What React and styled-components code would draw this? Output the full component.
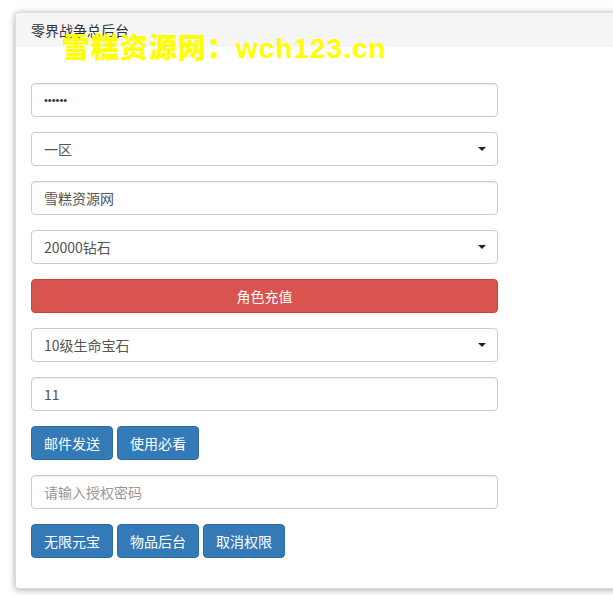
import React, { useState } from "react";
import styled, { createGlobalStyle } from "styled-components";

const GlobalStyle = createGlobalStyle`
  body {
    margin: 0;
    background: #fff;
    font-family: "Microsoft YaHei", "Noto Sans CJK SC", "Liberation Sans", sans-serif;
    font-size: 14px;
    color: #333;
  }
`;

const Page = styled.div`
  padding: 12px 0 0 15px;
  width: 613px;
  height: 595px;
  box-sizing: border-box;
  overflow: hidden;
`;

const Panel = styled.div`
  position: relative;
  width: 620px;
  background: #fff;
  border: 1px solid #ddd;
  border-radius: 4px;
  box-shadow: 0 1px 6px rgba(0, 0, 0, 0.35);
`;

const Heading = styled.div`
  height: 34px;
  padding: 0 15px;
  display: flex;
  align-items: center;
  background: #f5f5f5;
  border-radius: 3px 3px 0 0;
  font-size: 14px;
  color: #333;
`;

const Watermark = styled.div`
  position: absolute;
  left: 46px;
  top: 21px;
  font-family: "Liberation Sans", "Noto Sans CJK SC", sans-serif;
  font-weight: 900;
  font-size: 28px;
  line-height: 30px;
  letter-spacing: 1px;
  color: #ffff00;
  white-space: nowrap;
  pointer-events: none;
`;

const Body = styled.div`
  padding: 36px 15px 30px;
  width: 467px;
  display: flex;
  flex-direction: column;
  gap: 15px;
`;

const Input = styled.input`
  box-sizing: border-box;
  width: 100%;
  height: 34px;
  padding: 6px 12px;
  border: 1px solid #ccc;
  border-radius: 4px;
  font: inherit;
  font-size: 14px;
  color: #555;
  box-shadow: inset 0 1px 1px rgba(0, 0, 0, 0.075);
  outline: none;

  &[type="password"] {
    font-family: "Liberation Sans", sans-serif;
    font-size: 11px;
    letter-spacing: 0;
    color: #333;
  }

  &::placeholder {
    color: #999;
  }
`;

const SelectWrap = styled.div`
  position: relative;

  &::after {
    content: "";
    position: absolute;
    right: 12px;
    top: 15px;
    border-left: 4px solid transparent;
    border-right: 4px solid transparent;
    border-top: 4px solid #222;
    pointer-events: none;
  }
`;

const Select = styled.select`
  box-sizing: border-box;
  width: 100%;
  height: 34px;
  padding: 6px 12px;
  border: 1px solid #ccc;
  border-radius: 4px;
  background: #fff;
  font: inherit;
  font-size: 14px;
  color: #555;
  appearance: none;
  outline: none;
`;

const Button = styled.button`
  box-sizing: border-box;
  height: 34px;
  padding: 6px 12px;
  border: 1px solid ${(p) => (p.$danger ? "#d43f3a" : "#2e6da4")};
  border-radius: 4px;
  background: ${(p) => (p.$danger ? "#d9534f" : "#337ab7")};
  color: #fff;
  font: inherit;
  font-size: 14px;
  width: ${(p) => (p.$block ? "100%" : "auto")};
  cursor: pointer;
`;

const ButtonRow = styled.div`
  display: flex;
  gap: 4px;
`;

const Field = ({ options, value, onChange }) => (
  <SelectWrap>
    <Select value={value} onChange={(e) => onChange(e.target.value)}>
      {options.map((o) => (
        <option key={o}>{o}</option>
      ))}
    </Select>
  </SelectWrap>
);

export default function App() {
  const [server, setServer] = useState("一区");
  const [pack, setPack] = useState("20000钻石");
  const [item, setItem] = useState("10级生命宝石");

  return (
    <Page>
      <GlobalStyle />
      <Panel>
        <Heading>零界战争总后台</Heading>
        <Watermark>雪糕资源网：wch123.cn</Watermark>
        <Body>
          <Input type="password" defaultValue="123456" />
          <Field options={["一区", "二区", "三区"]} value={server} onChange={setServer} />
          <Input defaultValue="雪糕资源网" />
          <Field options={["20000钻石", "50000钻石"]} value={pack} onChange={setPack} />
          <Button $danger $block>角色充值</Button>
          <Field options={["10级生命宝石", "10级攻击宝石"]} value={item} onChange={setItem} />
          <Input defaultValue="11" />
          <ButtonRow>
            <Button>邮件发送</Button>
            <Button>使用必看</Button>
          </ButtonRow>
          <Input placeholder="请输入授权密码" />
          <ButtonRow>
            <Button>无限元宝</Button>
            <Button>物品后台</Button>
            <Button>取消权限</Button>
          </ButtonRow>
        </Body>
      </Panel>
    </Page>
  );
}
